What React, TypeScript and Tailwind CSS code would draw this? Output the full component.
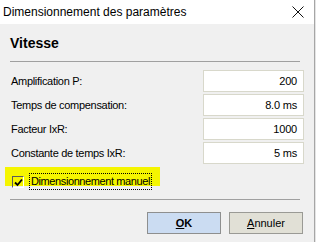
import React from 'react';

const rows = [
  { label: 'Amplification P:', value: '200' },
  { label: 'Temps de compensation:', value: '8.0 ms' },
  { label: 'Facteur IxR:', value: '1000' },
  { label: 'Constante de temps IxR:', value: '5 ms' },
];

const App: React.FC = () => {
  return (
    <div className="w-[316px] h-[242px] flex overflow-hidden font-['Liberation_Sans',Arial,sans-serif] text-black">
      <div className="w-[314px] flex flex-col bg-[#f0f0f0]">
        {/* title bar */}
        <div className="h-[24px] bg-white flex items-center justify-between pl-[3px] pr-[10px]">
          <span className="text-[12px] leading-none">Dimensionnement des paramètres</span>
          <svg width="12" height="12" viewBox="0 0 12 12" className="mt-[-1px]">
            <path d="M0.5 0.5 L11.5 11.5 M11.5 0.5 L0.5 11.5" stroke="#111" strokeWidth="1" fill="none" />
          </svg>
        </div>

        <div className="flex flex-col px-[10px]">
          <div className="mt-[11px] text-[14px] leading-[16px] font-bold">Vitesse</div>
          <div className="mt-[10px] h-px bg-[#a0a0a0] mr-[4px]" />

          <div className="mt-[8px] flex flex-col gap-[2px]">
            {rows.map((r) => (
              <div key={r.label} className="h-[22px] flex items-center justify-between">
                <span className="pl-px text-[11px] tracking-[-0.3px]">{r.label}</span>
                <div className="w-[101px] h-[22px] bg-white border border-[#d8d8cb] flex items-center justify-end pr-[6px] text-[11px] tracking-[-0.2px]">
                  {r.value}
                </div>
              </div>
            ))}
          </div>

          {/* highlighted checkbox row */}
          <div className="mt-[3px] -ml-[5px] w-[155px] h-[19px] bg-[#f5f500] flex items-start pl-[7px]">
            <div className="mt-[9px] w-[12px] h-[12px] shrink-0 border border-[#5a5a5a] border-b-white border-r-white flex items-center justify-center">
              <svg width="9" height="9" viewBox="0 0 9 9">
                <path d="M1 4.5 L3.5 7 L8 1.5" stroke="#000" strokeWidth="1.8" fill="none" />
              </svg>
            </div>
            <div className="ml-[5px] mt-[6px] h-[17px] border border-dotted border-black flex items-center px-px text-[11px] tracking-[-0.4px]">
              Dimensionnement manuel
            </div>
          </div>

          <div className="mt-[13px] h-px bg-[#a0a0a0] mr-[4px]" />

          <div className="mt-[12px] flex justify-end gap-[8px] pr-px">
            <button className="w-[74px] h-[22px] bg-[#cbdcf2] border border-[#8e8f8f] text-[11px] font-bold">
              <span className="underline">O</span>K
            </button>
            <button className="w-[74px] h-[22px] bg-[#e1e0d6] border border-[#9a9a95] text-[11px]">
              <span className="underline">A</span>nnuler
            </button>
          </div>
        </div>
      </div>
      <div className="w-px bg-[#a6a6a6]" />
      <div className="w-px bg-[#e4e4e4]" />
    </div>
  );
};

export default App;
